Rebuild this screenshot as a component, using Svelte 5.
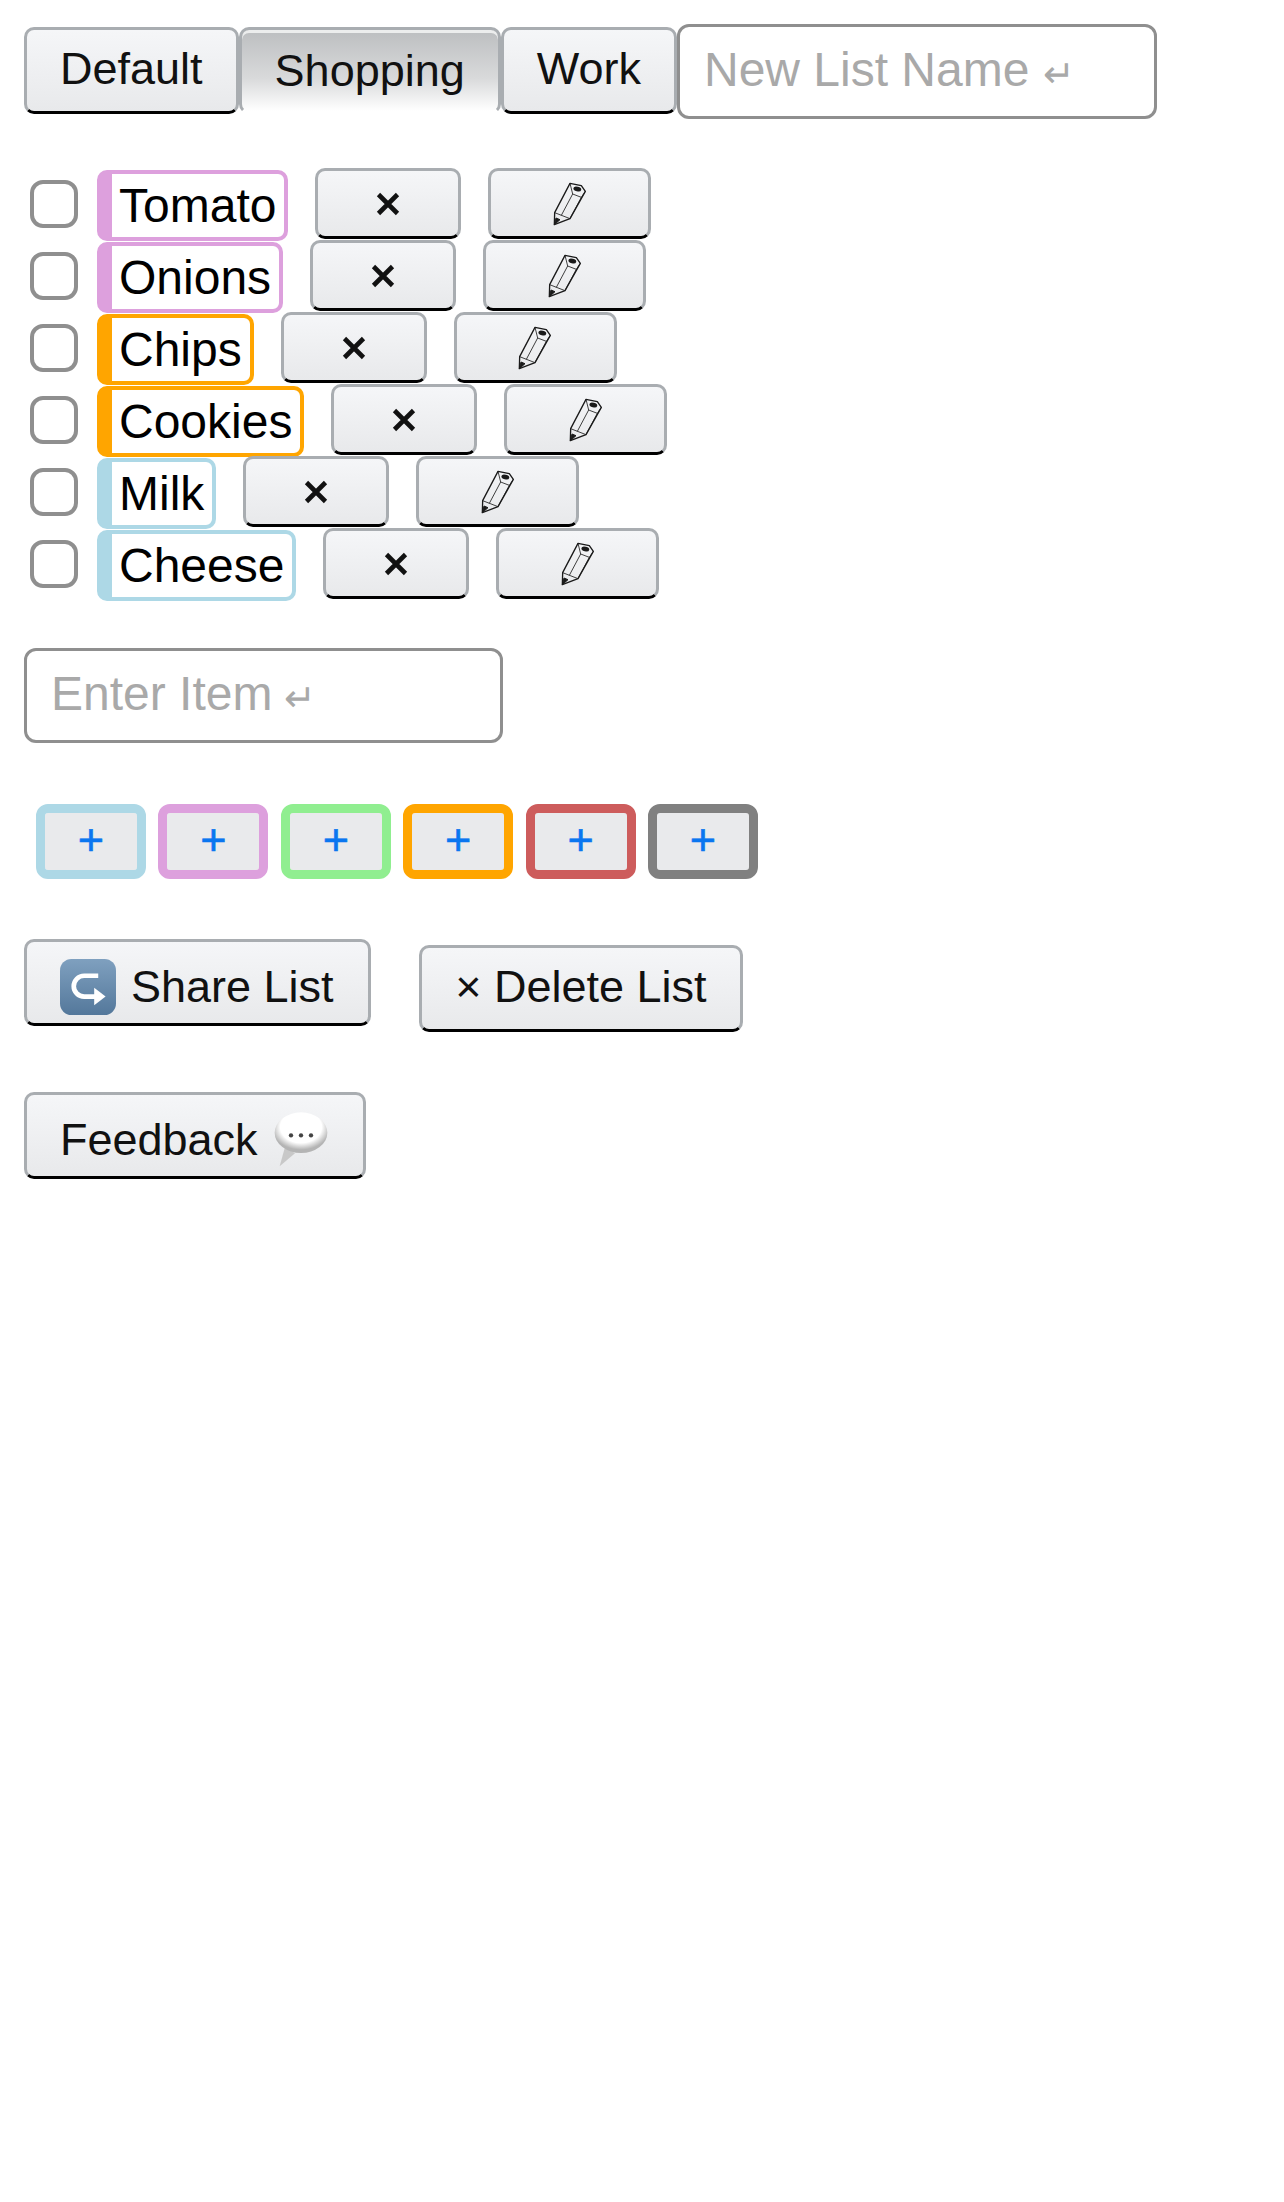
<script>
  const lists = ['Default', 'Shopping', 'Work']
  const items = [
    { name: 'Tomato', color: 'plum' },
    { name: 'Onions', color: 'plum' },
    { name: 'Chips', color: 'orange' },
    { name: 'Cookies', color: 'orange' },
    { name: 'Milk', color: 'lightblue' },
    { name: 'Cheese', color: 'lightblue' }
  ]
  const swatches = ['lightblue', 'plum', 'lightgreen', 'orange', 'indianred', 'gray']
</script>

<main>
  <div class="lists">
    {#each lists as name}
      <button class="btn tab" class:active={name === 'Shopping'}><span>{name}</span></button>
    {/each}
    <div class="field-wrap wide">
      <input class="field" placeholder="New List Name" />
      <span class="enter list-enter">↵</span>
    </div>
  </div>

  <ul>
    {#each items as item}
      <li>
        <input type="checkbox" />
        <span class="name" style:border-color={item.color}>{item.name}</span>
        <button class="btn small" aria-label="remove">
          <svg width="24" height="24" viewBox="0 0 24 24"><path d="M2.5 2.5 21.5 21.5M21.5 2.5 2.5 21.5" stroke="#111" stroke-width="4.6" fill="none" /></svg>
        </button>
        <button class="btn small edit" aria-label="edit">
          <svg width="34" height="44" viewBox="0 0 100 132">
            <g fill="none" stroke="#1a1a1a" stroke-linejoin="round">
              <path d="M3 128 L4 92 L50 4 L84 11 L96 28 L50 110 Z" stroke-width="4" />
              <path d="M4 92 L50 110 M24 100 L58 36 L84 46 L50 110 M58 36 L50 4 M84 46 L96 28" stroke-width="2.5" />
              <path d="M3 128 L8 108 L20 113 Z" fill="#1a1a1a" stroke-width="3" />
            </g>
            <ellipse cx="72" cy="21" rx="12" ry="7" transform="rotate(15 72 21)" fill="#1a1a1a" />
          </svg>
        </button>
      </li>
    {/each}
  </ul>

  <div class="field-wrap item">
    <input class="field" placeholder="Enter Item" />
    <span class="enter item-enter">↵</span>
  </div>

  <div class="swatches">
    {#each swatches as color}
      <button class="swatch" style:border-color={color}>+</button>
    {/each}
  </div>

  <div class="actions">
    <button class="btn action share">
      <svg width="56" height="56" viewBox="0 0 167 167">
        <defs>
          <linearGradient id="share" x1="0" y1="0" x2="0" y2="1">
            <stop offset="0" stop-color="#7fa0bf" />
            <stop offset="1" stop-color="#54789b" />
          </linearGradient>
        </defs>
        <rect width="167" height="167" rx="34" fill="url(#share)" />
        <path d="M114 50 H72 a31 31 0 0 0 0 62 H106" fill="none" stroke="#fff" stroke-width="14" />
        <path d="M102 86 L136 112 L102 138 Z" fill="#fff" />
      </svg>
      Share List
    </button>
    <button class="btn action delete">× Delete List</button>
  </div>

  <button class="btn action feedback">
    Feedback
    <svg width="54" height="55" viewBox="0 0 160 165">
      <defs>
        <radialGradient id="bubble" cx="0.5" cy="0.36" r="0.56">
          <stop offset="0.7" stop-color="#ffffff" />
          <stop offset="1" stop-color="#b4b4b4" />
        </radialGradient>
      </defs>
      <path d="M32 105 L16 163 L62 124 Z" fill="#c8c8c8" />
      <ellipse cx="80" cy="62" rx="79" ry="61" fill="url(#bubble)" />
      <circle cx="50" cy="70" r="6.5" fill="#444" />
      <circle cx="80" cy="70" r="6.5" fill="#444" />
      <circle cx="110" cy="70" r="6.5" fill="#444" />
    </svg>
  </button>
</main>

<style>
  :global(body) {
    margin: 0;
    background: #fff;
  }
  main {
    padding: 24px 24px 0;
    font-family: "Liberation Sans", Arial, sans-serif;
    min-height: 2178px;
    box-sizing: border-box;
  }
  .btn {
    box-sizing: border-box;
    border: 3px solid #a9adb1;
    border-bottom-color: #000;
    border-radius: 10px;
    background: linear-gradient(#f5f6f8, #e8e9eb);
    color: #111;
    font: inherit;
    font-size: 45px;
    line-height: 51px;
    padding: 15px 33px;
    margin: 0;
  }
  .lists {
    display: flex;
    align-items: flex-start;
  }
  .tab {
    margin-top: 3px;
    padding: 13px 33px 17px;
  }
  .active {
    background: linear-gradient(#bcbec0, #d9dadb 60%, #fff);
    background-clip: padding-box;
    border-bottom-color: transparent;
    box-shadow: inset 0 3px 0 #eceded;
  }
  .active span {
    position: relative;
    top: 2px;
  }
  .field-wrap {
    position: relative;
    box-sizing: border-box;
    height: 95px;
  }
  .field {
    box-sizing: border-box;
    width: 100%;
    height: 95px;
    border: 3px solid #8f8f8f;
    border-radius: 12px;
    font: inherit;
    font-size: 48px;
    padding: 0 24px 5px;
    background: #fff;
    margin: 0;
    outline: none;
    display: block;
  }
  .field::placeholder {
    color: #a9a9a9;
  }
  .enter {
    position: absolute;
    top: 28px;
    font-size: 38px;
    line-height: 44px;
    color: #a9a9a9;
    pointer-events: none;
  }
  .list-enter {
    left: 366px;
  }
  .item-enter {
    left: 260px;
  }
  .wide {
    width: 480px;
  }
  .item {
    width: 479px;
    margin-top: 48px;
  }
  ul {
    list-style: none;
    margin: 49px 0 0;
    padding: 0;
  }
  li {
    display: flex;
    align-items: flex-start;
    height: 72px;
  }
  input[type='checkbox'] {
    appearance: none;
    box-sizing: border-box;
    width: 48px;
    height: 48px;
    border: 4.5px solid #8f8f8f;
    border-radius: 13px;
    background: #fff;
    margin: 12px 0 0 6px;
    flex: none;
  }
  .name {
    box-sizing: border-box;
    height: 71px;
    margin: 2px 27px 0 19px;
    padding: 0 8px 0 7px;
    border: 4.5px solid;
    border-left-width: 15px;
    border-radius: 10px;
    font-size: 48px;
    line-height: 64px;
    color: #000;
  }
  .small {
    width: 146px;
    height: 71px;
    padding: 0;
    display: flex;
    align-items: center;
    justify-content: center;
  }
  .edit {
    width: 163px;
    margin-left: 27px;
  }
  .swatches {
    display: flex;
    gap: 12.4px;
    margin: 61px 0 0 12px;
  }
  .swatch {
    box-sizing: border-box;
    width: 110px;
    height: 75px;
    border: 9px solid;
    border-radius: 12px;
    background: #e9eaec;
    background-clip: padding-box;
    color: #0a76f0;
    font: inherit;
    font-size: 45px;
    line-height: 44px;
    padding: 0 0 4px;
    -webkit-text-stroke: 0.6px #0a76f0;
  }
  .actions {
    display: flex;
    align-items: flex-start;
    margin-top: 60px;
  }
  .action {
    display: inline-flex;
    align-items: center;
    height: 87px;
    padding: 0 33px;
    white-space: nowrap;
  }
  .share {
    gap: 15px;
    padding: 8px 34px 0 33px;
  }
  .delete {
    margin: 6px 0 0 48.5px;
    padding-bottom: 5px;
  }
  .feedback {
    margin-top: 60px;
    gap: 16px;
    padding: 8px 35px 0 33px;
  }
</style>
